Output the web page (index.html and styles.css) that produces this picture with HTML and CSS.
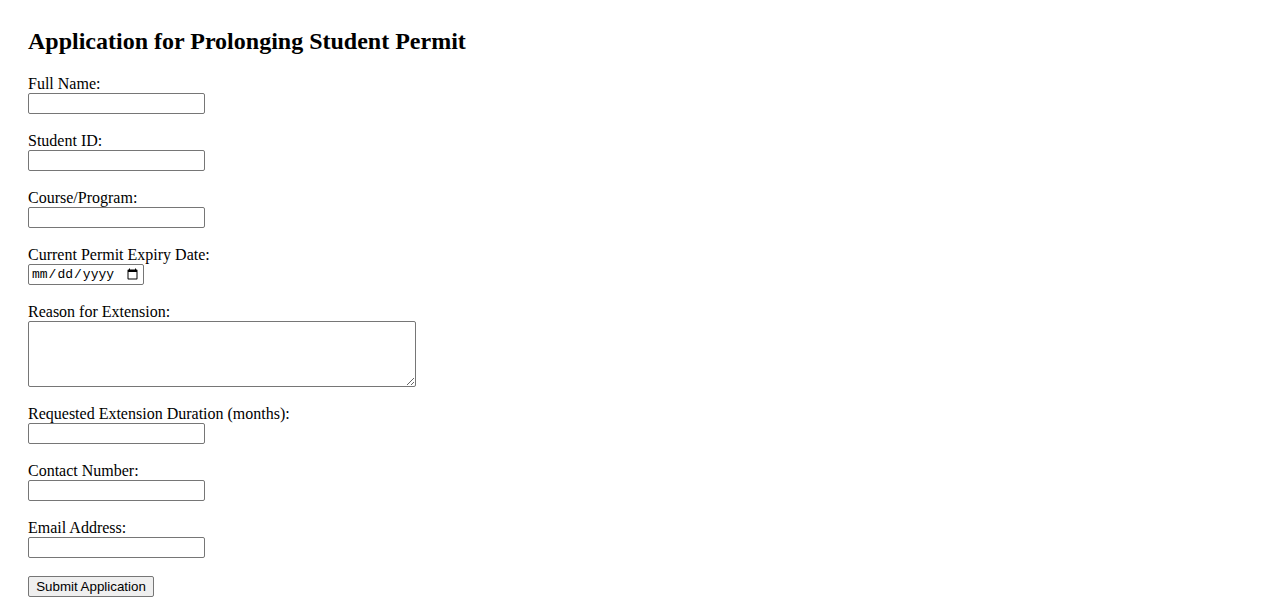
FILE: index.html
```html
<!DOCTYPE html>
<html lang="en">
<head>
<meta charset="utf-8">
<title>Application for Prolonging Student Permit</title>
<link rel="stylesheet" href="styles.css">
</head>
<body>
<div class="page">
  <h2 class="title">Application for Prolonging Student Permit</h2>
  <form class="form">
    <div class="field">
      <label class="label" for="name">Full Name:</label>
      <input class="text-input" type="text" id="name">
    </div>
    <div class="field">
      <label class="label" for="sid">Student ID:</label>
      <input class="text-input" type="text" id="sid">
    </div>
    <div class="field">
      <label class="label" for="course">Course/Program:</label>
      <input class="text-input" type="text" id="course">
    </div>
    <div class="field">
      <label class="label" for="expiry">Current Permit Expiry Date:</label>
      <input class="date-input" type="date" id="expiry">
    </div>
    <div class="field">
      <label class="label" for="reason">Reason for Extension:</label>
      <textarea class="textarea" id="reason"></textarea>
    </div>
    <div class="field">
      <label class="label" for="months">Requested Extension Duration (months):</label>
      <input class="text-input" type="number" id="months">
    </div>
    <div class="field">
      <label class="label" for="phone">Contact Number:</label>
      <input class="text-input" type="tel" id="phone">
    </div>
    <div class="field">
      <label class="label" for="email">Email Address:</label>
      <input class="text-input" type="email" id="email">
    </div>
    <button class="submit" type="submit">Submit Application</button>
  </form>
</div>
</body>
</html>
```
FILE: styles.css
```css
html, body {
  margin: 0;
  padding: 0;
  background: #ffffff;
}

body {
  font-family: "Liberation Serif", "Times New Roman", serif;
  font-size: 16px;
  color: #000000;
}

.page {
  padding: 27px 28px 0 28px;
}

.title {
  margin: 0 0 19px 0;
  font-size: 24px;
  font-weight: bold;
  line-height: 28px;
}

.form {
  display: flex;
  flex-direction: column;
  align-items: flex-start;
}

.field {
  display: flex;
  flex-direction: column;
  align-items: flex-start;
  margin-bottom: 17px;
}

.label {
  display: block;
  line-height: 19px;
  height: 19px;
}

.text-input,
.date-input,
.textarea {
  box-sizing: border-box;
  margin: 0;
  border: 1px solid #767676;
  border-radius: 2px;
  background: #ffffff;
  padding: 1px 2px;
}

.text-input {
  width: 177px;
  height: 21px;
  font-family: "Liberation Sans", Arial, sans-serif;
  font-size: 13.33px;
}

.text-input[type="number"] {
  -moz-appearance: textfield;
}
.text-input[type="number"]::-webkit-inner-spin-button,
.text-input[type="number"]::-webkit-outer-spin-button {
  -webkit-appearance: none;
  margin: 0;
}

.date-input {
  width: 116px;
  height: 21px;
  font-family: "Liberation Mono", "DejaVu Sans Mono", monospace;
  font-size: 13px;
  color: #000000;
}

.textarea {
  width: 388px;
  height: 66px;
  font-family: "Liberation Mono", monospace;
  font-size: 13.33px;
  resize: both;
}

.submit {
  box-sizing: border-box;
  margin: 1px 0 0 0;
  width: 126px;
  height: 21px;
  padding: 1px 6px;
  font-family: "Liberation Sans", Arial, sans-serif;
  font-size: 13.33px;
  color: #000000;
  background: #efefef;
  border: 1px solid #767676;
  border-radius: 2px;
}
```
